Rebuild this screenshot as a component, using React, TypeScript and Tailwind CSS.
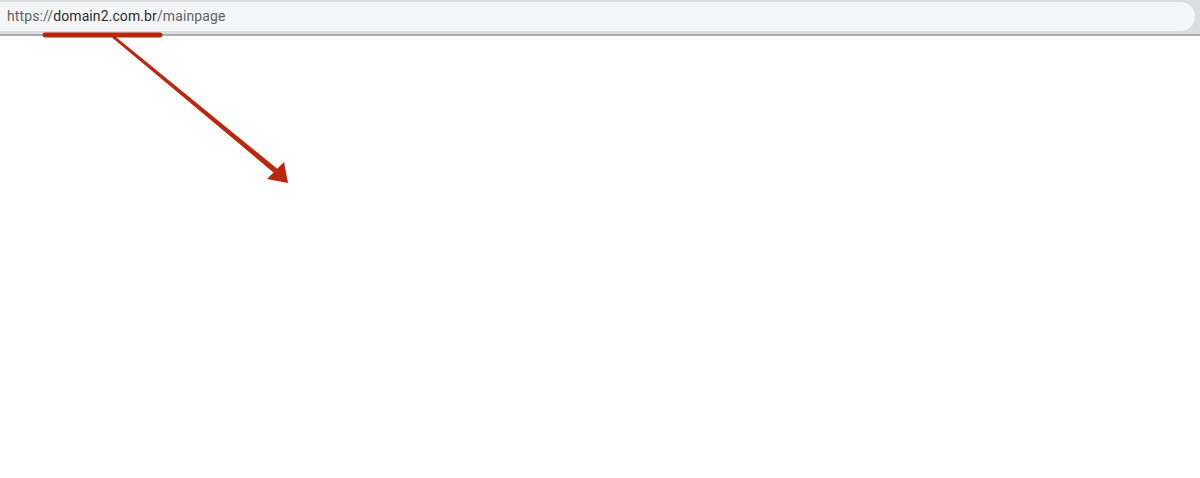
export default function App() {
  return (
    <div className="relative w-[1200px] h-[478px] bg-white overflow-hidden" style={{ fontFamily: "Roboto, 'Noto Sans', sans-serif" }}>
      {/* Browser address bar */}
      <div className="h-[36px] bg-[#dcdde1] pt-[2px] pr-[5px] border-b-[2px] border-[#a9abaf]">
        <div className="h-[29px] bg-[#f4f5f7] rounded-r-[15px] flex items-center pl-[7px] text-[14px] tracking-[0.1px]">
          <span className="text-[#5f6368]">https://</span>
          <span className="text-[#2b2d30]">domain2.com.br</span>
          <span className="text-[#5f6368]">/mainpage</span>
        </div>
      </div>

      {/* Annotation */}
      <svg className="absolute left-0 top-0 pointer-events-none" width="1200" height="478" viewBox="0 0 1200 478">
        <line x1="45" y1="35" x2="160" y2="35" stroke="#b9280d" strokeWidth="5" strokeLinecap="round" />
        <polygon points="112,37.5 114,35.5 280,171 276.5,175" fill="#b9280d" />
        <polygon points="288,183 267,179 284,162" fill="#b9280d" />
      </svg>
    </div>
  );
}
